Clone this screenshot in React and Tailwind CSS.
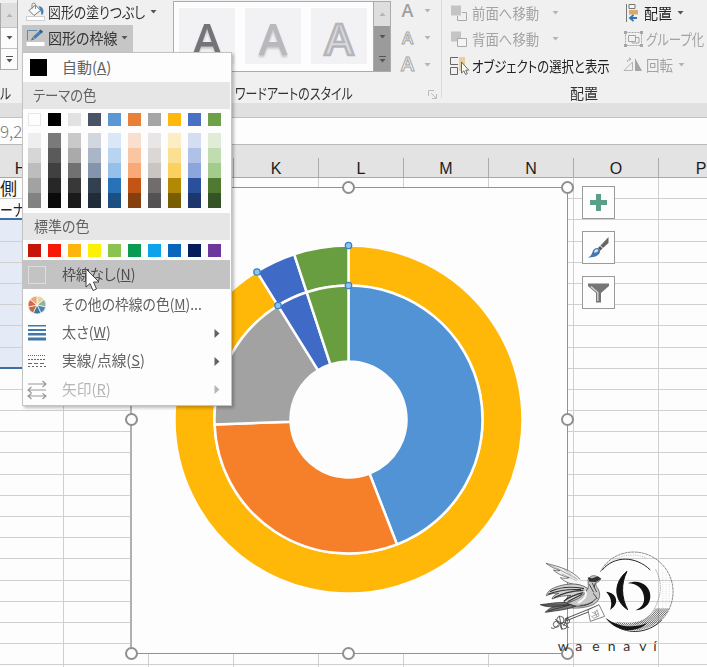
import { useLayoutEffect, useRef } from 'react'

const THEME = [
  { base: 'bg-[#fdfdfd]', shades: ['bg-[#eeeeee]', 'bg-[#d6d6d6]', 'bg-[#bdbdbd]', 'bg-[#a2a2a2]', 'bg-[#828282]'] },
  { base: 'bg-[#000000]', shades: ['bg-[#7a7a7a]', 'bg-[#5a5a5a]', 'bg-[#404040]', 'bg-[#272727]', 'bg-[#0b0b0b]'] },
  { base: 'bg-[#e2e2e2]', shades: ['bg-[#c9c9c9]', 'bg-[#aaaaaa]', 'bg-[#717171]', 'bg-[#383838]', 'bg-[#1a1a1a]'] },
  { base: 'bg-[#4a5266]', shades: ['bg-[#d2d6de]', 'bg-[#abb5c8]', 'bg-[#8494ad]', 'bg-[#32404f]', 'bg-[#202c38]'] },
  { base: 'bg-[#5b97d5]', shades: ['bg-[#d9e7f6]', 'bg-[#b9d4f0]', 'bg-[#94c0ea]', 'bg-[#2873b8]', 'bg-[#1c5083]'] },
  { base: 'bg-[#ea8036]', shades: ['bg-[#f9dfd0]', 'bg-[#fac5a2]', 'bg-[#f7a978]', 'bg-[#c25516]', 'bg-[#85400f]'] },
  { base: 'bg-[#a5a5a5]', shades: ['bg-[#e8e6e6]', 'bg-[#dad7d5]', 'bg-[#c9c5c3]', 'bg-[#716d6c]', 'bg-[#545252]'] },
  { base: 'bg-[#fdb80b]', shades: ['bg-[#fcedc4]', 'bg-[#fbe092]', 'bg-[#fbd05f]', 'bg-[#b28904]', 'bg-[#785d03]'] },
  { base: 'bg-[#4870c5]', shades: ['bg-[#d5def1]', 'bg-[#b0c1e8]', 'bg-[#8ca5dc]', 'bg-[#2b509b]', 'bg-[#1d366c]'] },
  { base: 'bg-[#6ea147]', shades: ['bg-[#e0ebd8]', 'bg-[#c1dcb0]', 'bg-[#a3cb8b]', 'bg-[#507a32]', 'bg-[#365327]'] },
]

const STANDARD = [
  'bg-[#c41508]',
  'bg-[#f91805]',
  'bg-[#fdb70c]',
  'bg-[#fbf102]',
  'bg-[#8cc34f]',
  'bg-[#0b9a52]',
  'bg-[#0ba4ea]',
  'bg-[#0a66bd]',
  'bg-[#061d5c]',
  'bg-[#6d389c]',
]

const COLUMNS = ['H', 'I', 'J', 'K', 'L', 'M', 'N', 'O', 'P']

// Squeezes the text to the narrow widths of the UI font
function Label({ width, className = '', children }) {
  const ref = useRef(null)

  useLayoutEffect(() => {
    const el = ref.current
    el.style.transform = `scaleX(${width / el.offsetWidth})`
  }, [width])

  return (
    <span className={`block shrink-0 whitespace-nowrap ${className}`} style={{ width }}>
      <span ref={ref} className="inline-block origin-left [font-feature-settings:'palt']">
        {children}
      </span>
    </span>
  )
}

function Caret({ className = 'text-[#555]' }) {
  return (
    <svg width="7" height="4" viewBox="0 0 7 4" className={`shrink-0 ${className}`}>
      <path d="M0.5 0h6L3.5 3.6z" fill="currentColor" />
    </svg>
  )
}

function ScrollButtons({ dark }) {
  return (
    <div className="flex h-full w-[17px] flex-col border-l border-[#ababab]">
      <div className="flex h-[24px] items-center justify-center bg-[#dedede]">
        <Caret className="rotate-180 text-[#b4b4b4]" />
      </div>
      <div className={`flex h-[22px] items-center justify-center ${dark ? 'bg-[#9b9b9b]' : 'border-y border-[#c4c4c4] bg-[#fcfcfc]'}`}>
        <Caret />
      </div>
      <div className={`flex flex-1 flex-col items-center justify-center gap-[2px] ${dark ? 'bg-[#9b9b9b]' : 'bg-[#fcfcfc]'}`}>
        <span className="h-px w-[7px] bg-[#555]" />
        <Caret />
      </div>
    </div>
  )
}

function FillIcon() {
  return (
    <svg width="20" height="20" viewBox="0 0 20 20" fill="none" className="shrink-0">
      <path d="M3 8.5 9.5 3l5 5.5-6.5 5z" fill="#fafafa" stroke="#777" />
      <path d="M6 7V2.500a1.800 1.800 0 0 1 3.500 0V7" stroke="#888" />
      <path d="M12.500 4c3 .2 5 2.300 5 5.500 0 2-.8 3.500-2 3.500-.5-3-1.200-5.500-3-9z" fill="#4c82b4" />
      <path d="M.5 14.500h18v4H.5z" fill="#fff" stroke="#bdbdbd" strokeWidth=".7" />
    </svg>
  )
}

function OutlineIcon() {
  return (
    <svg width="20" height="20" viewBox="0 0 20 20" fill="none" className="shrink-0">
      <path d="M11 2.500H1.500v10" stroke="#6688a8" />
      <path d="M5 12.500l1.200-3.300 2.300 2.100z" fill="#666" />
      <path d="m6.800 8.700 7.500-6.800 2.300 2.300-7.500 6.900z" fill="#4480b8" />
      <path d="m13 3 1.700-1.500 2.300 2.300-1.600 1.500z" fill="#355b80" />
      <path d="M.5 14h18v4H.5z" fill="#fff" />
    </svg>
  )
}

function LayerIcon({ back }) {
  return (
    <svg width="18" height="18" viewBox="0 0 18 18" fill="none" className="shrink-0">
      <path d="M1 1.500h10v10H1z" fill="#c4c4c4" />
      {back ? (
        <path d="M7.500 8.500h9v8h-9z" fill="#f4f4f4" stroke="#a9a9a9" />
      ) : (
        <path d="M12 8.500h4.500v8h-9V12" stroke="#a9a9a9" />
      )}
    </svg>
  )
}

function SelectionPaneIcon() {
  return (
    <svg width="20" height="20" viewBox="0 0 20 20" fill="none" className="shrink-0">
      <path d="M8 1.500H.5v7H8M.5 11.500h7v7h-7z" stroke="#666" />
      <path d="M9 1h6v9l-3 5H9z" fill="#e9cf9d" />
      <path d="M11.500 6v11l2.400-2.200 1.700 3.700 1.700-.8-1.600-3.500h3z" fill="#fff" stroke="#666" />
    </svg>
  )
}

function AlignIcon() {
  return (
    <svg width="16" height="18" viewBox="0 0 16 18" fill="none" className="shrink-0">
      <path d="M1.500 0v18" stroke="#777" />
      <path d="M4 .5h6v4H4z" fill="#f4f4f4" stroke="#777" />
      <path d="M4 6h9v4.500H4z" fill="#dca866" />
      <path d="M12 14H5m3.500-3L5 14l3.500 3" stroke="#2e75b6" strokeWidth="1.800" />
    </svg>
  )
}

function GroupIcon() {
  return (
    <svg width="21" height="18" viewBox="0 0 21 18" fill="none" stroke="#a5a5a5" className="shrink-0">
      <path d="M2.500 2.500h16v13h-16z" strokeDasharray="2 1" />
      <path d="M5.500 5.500h7v6h-7zM12.500 7.500h3.500V13H9v-1.500" />
      <path d="M1 1h3v3H1zM17 1h3v3h-3zM1 14h3v3H1zM17 14h3v3h-3z" fill="#a5a5a5" stroke="none" />
    </svg>
  )
}

function RotateIcon() {
  return (
    <svg width="20" height="16" viewBox="0 0 20 16" fill="none" className="shrink-0">
      <path d="M9.500 5v8.500H1z" stroke="#b4b4b4" />
      <path d="M12 1v13h7z" fill="#a5a5a5" />
      <path d="M4.500 5c0-2 1-3 3-3M6 .5 8 2 6 3.800" stroke="#b0b0b0" />
    </svg>
  )
}

function WordArt({ children }) {
  return <div className="flex h-14 w-14 items-center justify-center bg-[#f2f2f5]">{children}</div>
}

function ArtLetter({ fill, stroke, strokeWidth, className = '' }) {
  return (
    <svg width="56" height="56" viewBox="0 0 56 56" className={className}>
      <text
        x="28"
        y="46.500"
        textAnchor="middle"
        fontSize="44"
        className="font-['Open_Sans',sans-serif] font-semibold"
        fill={fill}
        stroke={stroke}
        strokeWidth={strokeWidth}
      >
        A
      </text>
    </svg>
  )
}

function TextTool({ filled, size }) {
  return (
    <div className="flex h-[27px] items-center gap-2">
      <svg width="17" height="20" viewBox="0 0 17 20" className="shrink-0">
        <text
          x="8.500"
          y="16"
          textAnchor="middle"
          fontSize={size}
          className="font-['Open_Sans',sans-serif] font-semibold"
          fill={filled ? '#a0a0a0' : '#fafafa'}
          stroke={filled ? 'none' : '#a5a5a5'}
          strokeWidth="1"
        >
          A
        </text>
      </svg>
      <Caret className="text-[#b4b4b4]" />
    </div>
  )
}

function Ribbon() {
  return (
    <div className="flex h-[103px] bg-[#f0f0f0] text-[15px] leading-5 text-[#333]">
      <div className="flex w-[22px] flex-col">
        <div className="h-[71px] w-[18px] border-b border-r border-[#ababab] pt-[3px]">
          <ScrollButtons />
        </div>
        <Label width={11} className="mt-[13px]">ル</Label>
      </div>

      <div className="w-[151px]">
        <div className="flex h-[23px] items-center pl-1">
          <FillIcon />
          <Label width={97} className="ml-[2px]">図形の塗りつぶし</Label>
          <Caret className="ml-[5px] text-[#555]" />
        </div>
        <div className="mt-[2px] flex h-[28px] w-[111px] items-center bg-[#c6c6c6] pb-[2px] pl-1">
          <OutlineIcon />
          <Label width={69} className="ml-[2px]">図形の枠線</Label>
          <Caret className="ml-[4px] text-[#555]" />
        </div>
      </div>

      <div className="w-[218px]">
        <div className="mt-px flex h-[71px] justify-between border border-[#ababab] bg-[#fdfdfd]">
          <div className="flex gap-[10px] pl-[5px] pt-[6px]">
            <WordArt>
              <ArtLetter fill="#737378" className="drop-shadow-[0_2px_1px_rgba(0,0,0,0.2)]" />
            </WordArt>
            <WordArt>
              <ArtLetter fill="#b9b9bd" className="drop-shadow-[0_2px_1px_rgba(0,0,0,0.2)]" />
            </WordArt>
            <WordArt>
              <ArtLetter fill="#dadade" stroke="#b5b5b9" strokeWidth="2.500" />
            </WordArt>
          </div>
          <ScrollButtons dark />
        </div>
        <Label width={118} className="ml-[62px] mt-[11px]">ワードアートのスタイル</Label>
      </div>

      <div className="flex w-[50px] flex-col pl-[8px]">
        <div className="-mt-[3px]">
          <TextTool filled size={18} />
          <TextTool size={17} />
          <TextTool size={20} />
        </div>
        <svg width="9" height="9" viewBox="0 0 9 9" fill="none" stroke="#bbb" className="ml-[29px] mt-[12px]">
          <path d="M.5 6V.5H6M3 3l5 5M8.500 4v4.500H4" />
        </svg>
      </div>

      <div className="h-[98px] w-px bg-[#dcdcdc]" />

      <div className="flex flex-1 flex-col pl-[8px]">
        <div className="flex h-[80px] pt-px">
          <div className="w-[173px] text-[#a3a3a3]">
            <div className="flex h-[23px] items-center">
              <LayerIcon />
              <Label width={67} className="ml-[4px]">前面へ移動</Label>
              <Caret className="ml-[13px] text-[#b4b4b4]" />
            </div>
            <div className="mt-px flex h-[28px] items-center">
              <LayerIcon back />
              <Label width={67} className="ml-[4px]">背面へ移動</Label>
              <Caret className="ml-[13px] text-[#b4b4b4]" />
            </div>
            <div className="flex h-[26px] items-center text-[#222]">
              <SelectionPaneIcon />
              <Label width={138} className="ml-[2px]">オブジェクトの選択と表示</Label>
            </div>
          </div>
          <div className="text-[#a3a3a3]">
            <div className="flex h-[23px] items-center pl-[2px] text-[#222]">
              <AlignIcon />
              <Label width={28} className="ml-[3px]">配置</Label>
              <Caret className="ml-[5px] text-[#555]" />
            </div>
            <div className="mt-px flex h-[27px] items-center">
              <GroupIcon />
              <Label width={58} className="ml-[2px]">グループ化</Label>
            </div>
            <div className="flex h-[26px] items-center">
              <RotateIcon />
              <Label width={27} className="ml-[3px]">回転</Label>
              <Caret className="ml-[5px] text-[#b4b4b4]" />
            </div>
          </div>
        </div>
        <Label width={28} className="ml-[120px] mt-[3px]">配置</Label>
      </div>
    </div>
  )
}

function Sheet() {
  return (
    <div className="flex-1">
      <div className="flex h-[34px] w-[744px] items-end border-b border-t border-b-[#a8a8a8] border-t-[#b8b8b8] bg-[#e3e3e3]">
        {COLUMNS.map((c, i) => (
          <div
            key={c}
            className={`flex h-[19px] shrink-0 items-center justify-center border-r border-[#ababab] pt-[2px] font-['Liberation_Sans',sans-serif] text-[16px] leading-4 text-[#1c1c1c] ${i === 0 ? 'w-[64px] pr-[22px]' : 'w-[85px]'}`}
          >
            {c}
          </div>
        ))}
      </div>
      {Array.from({ length: 24 }, (_, r) => (
        <div key={r} className="flex h-[21.2px] w-[744px]">
          {COLUMNS.map((c, i) => (
            <div
              key={c}
              className={`flex shrink-0 items-center border-b border-r border-[#d0d0d0] leading-[18px] text-[#222] ${i === 0 ? 'w-[64px]' : 'w-[85px]'} ${
                i === 0 && r >= 2 && r <= 8 ? 'bg-[#e4ebf7]' : ''
              } ${i === 0 && (r === 1 || r === 8) ? 'border-b-2 border-b-[#3f6ea5]' : ''}`}
            >
              {i === 0 && r === 0 && <Label width={17} className="text-[17px]">側</Label>}
              {i === 0 && r === 1 && <Label width={25} className="pt-px text-[16px]">ーナ</Label>}
            </div>
          ))}
        </div>
      ))}
    </div>
  )
}

const CX = 216.5
const CY = 231.5

function polar(r, deg) {
  const a = (deg * Math.PI) / 180
  return `${(CX + r * Math.sin(a)).toFixed(2)} ${(CY - r * Math.cos(a)).toFixed(2)}`
}

function Slice({ from, to, inner, outer, color }) {
  const large = to - from > 180 ? 1 : 0
  const d = `M${polar(outer, from)}A${outer} ${outer} 0 ${large} 1 ${polar(outer, to)}L${polar(inner, to)}A${inner} ${inner} 0 ${large} 0 ${polar(inner, from)}Z`
  return <path d={d} fill={color} stroke="#fdfdfd" strokeWidth="2.500" strokeLinejoin="round" />
}

function Doughnut() {
  const dots = [
    [216.5, 57.5],
    [216.5, 97.5],
    [125, 84],
    [146, 117.5],
  ]
  return (
    <svg width="435" height="465" viewBox="0 0 435 465">
      <Slice from={0} to={328.2} inner={134} outer={174} color="#ffb708" />
      <Slice from={328.2} to={341.8} inner={134} outer={174} color="#3f6bc6" />
      <Slice from={341.8} to={360} inner={134} outer={174} color="#689d40" />
      <Slice from={0} to={158.8} inner={58} outer={134} color="#5193d5" />
      <Slice from={158.8} to={267.9} inner={58} outer={134} color="#f58029" />
      <Slice from={267.9} to={328.2} inner={58} outer={134} color="#a2a2a2" />
      <Slice from={328.2} to={341.8} inner={58} outer={134} color="#3f6bc6" />
      <Slice from={341.8} to={360} inner={58} outer={134} color="#689d40" />
      {dots.map(([x, y]) => (
        <circle key={`${x}-${y}`} cx={x} cy={y} r="3.200" fill="#8cc4f0" stroke="#3c80c0" strokeWidth="1.300" />
      ))}
    </svg>
  )
}

function Handle({ className }) {
  return <span className={`absolute h-[13px] w-[13px] rounded-full border-2 border-[#8f8f8f] bg-[#fdfdfd] ${className}`} />
}

function ChartFrame() {
  return (
    <div className="absolute left-[130px] top-[187px] h-[467px] w-[438px] border border-l-2 border-[#929292] border-l-[#b0b0b0] bg-[#fdfdfd]">
      <Doughnut />
      <Handle className="-left-[7px] -top-[7px]" />
      <Handle className="-top-[7px] left-[210px]" />
      <Handle className="-right-[7px] -top-[7px]" />
      <Handle className="-left-[7px] top-[225px]" />
      <Handle className="-right-[7px] top-[225px]" />
      <Handle className="-bottom-[7px] -left-[7px]" />
      <Handle className="-bottom-[7px] left-[210px]" />
      <Handle className="-bottom-[7px] -right-[7px]" />
    </div>
  )
}

function ChartTools() {
  const button = 'flex h-[33px] w-[33px] items-center justify-center border border-[#9a9a9a] bg-[#fdfdfd]'
  return (
    <div className="absolute left-[582px] top-[186px] flex flex-col gap-[12px]">
      <div className={button}>
        <svg width="17" height="17" viewBox="0 0 17 17">
          <path d="M6 0h5v6h6v5h-6v6H6v-6H0V6h6z" fill="#5b9f89" />
        </svg>
      </div>
      <div className={button}>
        <svg width="21" height="21" viewBox="0 0 21 21">
          <path d="M20.500 0v6l-5.500 5-2.500-2.500z" fill="#666" />
          <path d="m12 9 2.500 2.500-2 2-2.500-2.500z" fill="#555" />
          <path d="M9.500 11c2 .5 3 2 2.500 4-1 4-6 5.500-12 5.500 3-1.500 3.500-3 4.500-5.500.7-2.500 2.500-4 5-4z" fill="#4377ad" />
          <path d="M9 12c-1.800.5-3 1.800-3 3.800 1.800 0 3.500-.7 4.500-2z" fill="#d5e5f3" />
        </svg>
      </div>
      <div className={button}>
        <svg width="21" height="20" viewBox="0 0 21 20">
          <path d="M0 .5h21v2.500l-8 7v9.500H8V10L0 3z" fill="#757575" />
          <path d="M3 3.500 9.800 9.500V18" fill="none" stroke="#dadada" strokeWidth="1.300" />
        </svg>
      </div>
    </div>
  )
}

function Logo() {
  const hatch = Array.from({ length: 34 }, (_, i) => i)
  return (
    <svg width="177" height="127" viewBox="0 0 531 381" fill="none" className="absolute left-[530px] top-[540px]">
      {/* moon ring */}
      <defs>
        <clipPath id="moon">
          <path d="M426 125A117 117 0 0 1 226 233C292 268 386 248 391 155 392 120 384 100 376 85 402 90 420 105 426 125Z" />
        </clipPath>
      </defs>
      <g clipPath="url(#moon)">
        {hatch.map((i) => (
          <path key={i} d={`M${225 + i * 6} 290l75 -85`} stroke="#333" strokeWidth="2.200" />
        ))}
        <path d="M398 90v118M408 90v110M418 90v105" stroke="#aaa" strokeWidth="1.500" strokeDasharray="2 5" />
      </g>
      <path d="M211 96C240 36 321 18 376 56c61 41 72 126 20 183" stroke="#555" strokeWidth="2" strokeDasharray="9 1.500" />
      <path d="M396 239c-34 36-88 46-132 23" stroke="#222" strokeWidth="3" />
      <path d="M216 91c37-46 102-43 145-1" stroke="#222" strokeWidth="3" />
      <path d="M225 77c35-30 83-41 125-23" stroke="#999" strokeWidth="2" strokeDasharray="3 4" />
      <path d="M376 88c22 36 19 80-4 120-14 24-36 38-62 46" stroke="#666" strokeWidth="1.500" strokeDasharray="5 2" />
      <path d="M226 233c40 30 86 32 126 16-30 31-92 30-126-16z" fill="#151515" />

      {/* letter marks */}
      <path d="M291 94c-42 34-40 87 2 115-19-36-21-78-2-115z" fill="#111" stroke="#111" strokeWidth="3" />
      <path d="M294 130c35-15 68 8 67 40-1 24-19 39-44 41 20-10 27-22 25-40-3-25-20-40-48-41z" fill="#111" />
      <path d="M228 155c24 1 42 24 22 47l-10 8c7-18 5-37-12-55z" fill="#111" />

      {/* dove */}
      <path d="M174 120c5-15 22-16 30-8l9 4-8 10c-11 3-9 9-1 20 12 22 2 43-22 51-28 10-68 9-92 2 25-7 41-18 57-31 16-14 29-17 28-31z" fill="#c8c8c8" stroke="#444" strokeWidth="2" />
      <path d="M173 112l13 3 18-6 9 8-15 9-20-1z" fill="#333" />
      <path d="M151 119C125 90 92 81 48 70c16 12 30 17 42 22-7 1-13 0-20-2 15 14 32 19 48 23-9 3-18 2-27 0 16 16 35 20 59 23" fill="#f3f3f3" stroke="#444" strokeWidth="2" />
      <path d="M60 75l63 31M81 85l58 32M95 101l46 22M102 88l42 31" stroke="#888" strokeWidth="1.500" />
      <path d="M173 145c-30-20-69-14-100-2-14 6-22 15-24 24 17-7 26-8 37-7-12 4-18 9-20 17 20-9 39-10 57-11-13 6-19 14-22 23 32-3 62-20 72-44z" fill="#d2d2d2" stroke="#333" strokeWidth="2" />
      <path d="M60 155c29-14 63-17 102-9M72 173c28-15 54-20 88-22M101 184c19-15 36-21 59-26M54 163c30-12 64-16 99-14M113 185l43-22" stroke="#333" strokeWidth="3.500" />
      <path d="M165 152c8 12 0 26-22 37" stroke="#fafafa" strokeWidth="5" />
      <path d="M105 188c-26-2-48 4-74 6 16 6 27 7 40 6-13 6-20 10-25 17 32-5 61-7 91-18z" fill="#777" stroke="#333" strokeWidth="2.500" />
      <path d="M39 195l78 0M54 213l65-18M70 201l55-8M125 197c25 4 47 0 64-12M150 196c18 0 36-6 50-22M178 133l13 24M186 128l14 28M196 128l-4 14M190 160l12 16" stroke="#333" strokeWidth="2.500" />

      {/* key */}
      <path d="M104 237l101-41M107 243l78-31" stroke="#333" strokeWidth="2.500" />
      <path d="M174 210l33-16 17 35-43 15z" fill="#fff" stroke="#444" strokeWidth="2" />
      <path d="M185 216l10 5 6-12 6 19-16 7-8-8M187 229l18-8M194 213l7 18" stroke="#777" strokeWidth="1.800" />
      <g stroke="#444" strokeWidth="2.500">
        <circle cx="91" cy="240" r="11" />
        <circle cx="79" cy="253" r="9" />
        <circle cx="101" cy="257" r="10" />
        <circle cx="112" cy="243" r="7" />
        <path d="M75 238l42 25M66 261c-6 9 13 4 19-7M88 227l8 43M113 230l-12 28" />
      </g>

      <text x="83 136 187 233 280 328 370" y="332" fontSize="42" fill="#333" className="font-['Lato',sans-serif]">
        waenaví
      </text>
    </svg>
  )
}

function Swatch({ className }) {
  return <span className={`h-[13px] w-[13px] ${className}`} />
}

function MenuItem({ icon, width, arrow, className = '', children }) {
  return (
    <div className={`flex items-center pl-[4px] ${className}`}>
      <span className="flex w-[20px] shrink-0 justify-center">{icon}</span>
      <Label width={width} className="ml-[15px] pb-[2px]">{children}</Label>
      {arrow && (
        <svg width="6" height="9" viewBox="0 0 6 9" className="ml-auto mr-[11px]">
          <path d="M.5 0 5.500 4.500.5 9z" fill="currentColor" />
        </svg>
      )}
    </div>
  )
}

function ColorWheelIcon() {
  const colors = ['#e9d49a', '#91b59c', '#4f83a8', '#4076a0', '#c26845', '#d9683f', '#e6a982']
  const point = (i) => {
    const a = (i * 2 * Math.PI) / 7
    return `${10 + 9 * Math.sin(a)} ${10 - 9 * Math.cos(a)}`
  }
  return (
    <svg width="20" height="20" viewBox="0 0 20 20">
      {colors.map((c, i) => (
        <path key={c} d={`M10 10L${point(i)}A9 9 0 0 1 ${point(i + 1)}Z`} fill={c} stroke="#fafafa" strokeWidth=".7" />
      ))}
      <circle cx="10" cy="10" r="1.500" fill="#f6efe0" />
    </svg>
  )
}

function OutlineMenu() {
  return (
    <div className="absolute left-[22px] top-[52px] h-[354px] w-[210px] border border-[#c3c3c3] bg-[#fdfdfd] text-[15px] leading-5 text-[#626262] shadow-[2px_2px_3px_rgba(0,0,0,0.25)]">
      <MenuItem className="h-[29px]" width={49} icon={<span className="mr-[-2px] h-[17px] w-[17px] bg-black" />}>
        自動(<u>A</u>)
      </MenuItem>
      <div className="mr-px flex h-[27px] items-center bg-[#e6e6e6] pb-px pl-[10px]">
        <Label width={63}>テーマの色</Label>
      </div>
      <div className="flex gap-[7px] pl-[5px] pt-[4px]">
        {THEME.map(({ base }) => (
          <Swatch key={base} className={base === 'bg-[#fdfdfd]' ? 'border border-[#e6e6e6] bg-[#fdfdfd]' : base} />
        ))}
      </div>
      <div className="mt-[7px] flex gap-[7px] pl-[5px]">
        {THEME.map(({ base, shades }) => (
          <div key={base} className="flex w-[13px] flex-col">
            {shades.map((s) => (
              <span key={s} className={`h-[15px] ${s}`} />
            ))}
          </div>
        ))}
      </div>
      <div className="mr-px mt-[5px] flex h-[27px] items-center bg-[#e6e6e6] pb-[2px] pl-[11px]">
        <Label width={55}>標準の色</Label>
      </div>
      <div className="flex h-[20px] items-center gap-[7px] pl-[5px]">
        {STANDARD.map((c) => (
          <Swatch key={c} className={c} />
        ))}
      </div>
      <MenuItem
        className="mr-px h-[29px] bg-[#c3c3c3] text-[#4c4c4c]"
        width={73}
        icon={<span className="h-[18px] w-[18px] border border-[#dedede]" />}
      >
        枠線なし(<u>N</u>)
      </MenuItem>
      <MenuItem className="h-[31px]" width={140} icon={<ColorWheelIcon />}>
        その他の枠線の色(<u>M</u>)...
      </MenuItem>
      <MenuItem
        className="h-[26px]"
        width={49}
        arrow
        icon={
          <svg width="18" height="16" viewBox="0 0 18 16" fill="#3f78ad">
            <path d="M0 0h18v1.500H0zM0 4h18v2H0zM0 8h18v2.500H0zM0 12.500h18v3H0z" />
          </svg>
        }
      >
        太さ(<u>W</u>)
      </MenuItem>
      <MenuItem
        className="h-[30px]"
        width={83}
        arrow
        icon={
          <svg width="18" height="14" viewBox="0 0 18 14" fill="none" stroke="#666">
            <path d="M0 1.500h18" strokeDasharray="1 1" />
            <path d="M0 5.500h18" strokeDasharray="2 1" />
            <path d="M0 9.500h18" strokeDasharray="4 2" />
            <path d="M0 12.500h18" strokeDasharray="2 2" />
          </svg>
        }
      >
        実線/点線(<u>S</u>)
      </MenuItem>
      <MenuItem
        className="h-[27px] text-[#b6b6b6]"
        width={49}
        arrow
        icon={
          <svg width="20" height="20" viewBox="0 0 20 20" fill="none" stroke="#999" strokeWidth="1.200">
            <path d="M1 4h18M15.500 1 19 4l-3.500 3M19 10H1M4.500 7 1 10l3.500 3M1 16h18M4.500 13.500 1 16l3.500 3M15.500 13.500 19 16l-3.500 3" />
          </svg>
        }
      >
        矢印(<u>R</u>)
      </MenuItem>
    </div>
  )
}

export default function App() {
  return (
    <div className="relative flex h-[667px] w-[707px] flex-col overflow-hidden bg-[#fdfdfd] font-['Noto_Sans_CJK_JP',sans-serif]">
      <Ribbon />
      <div className="h-[15px] shrink-0 border-b border-[#c2c2c2] bg-[#e0e0e0]" />
      <div className="flex h-[26px] shrink-0 items-center text-[17px] leading-5 text-[#777]">
        <Label width={22} className="font-light">9,2</Label>
      </div>
      <Sheet />
      <ChartFrame />
      <ChartTools />
      <OutlineMenu />
      <Logo />
      <svg width="15" height="24" viewBox="0 0 15 24" className="absolute left-[85px] top-[268px]">
        <path d="M1 1v18l4-3.500 3 7 3.500-1.500-3-7H14z" fill="#fff" stroke="#444" strokeWidth="1" />
      </svg>
    </div>
  )
}
